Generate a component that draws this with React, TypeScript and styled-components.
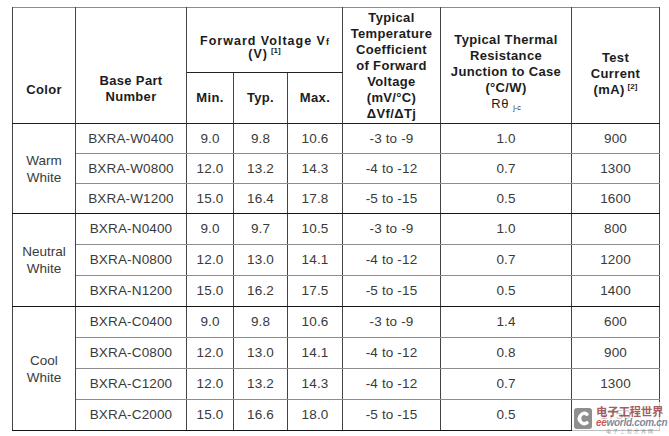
import * as React from "react";
import styled, { createGlobalStyle } from "styled-components";

const ink = "#1c1c1c";
const dataInk = "#3a3a3a";
const rule = "#444";
const lightRule = "#8c8c8c";

const GlobalStyle = createGlobalStyle`
  html, body {
    margin: 0;
    padding: 0;
    background: #fff;
  }
  body {
    font-family: "Liberation Sans", Arial, sans-serif;
  }
`;

const Page = styled.div`
  position: relative;
  width: 669px;
  height: 436px;
  padding: 7px 0 0 12px;
  box-sizing: border-box;
  overflow: hidden;
`;

const Table = styled.table`
  border-collapse: collapse;
  table-layout: fixed;
  width: 647px;
  border-top: 1px solid ${lightRule};
  border-left: 1px solid #111;
  border-right: 1px solid #222;
  border-bottom: 1px solid #111;
`;

const HeadCell = styled.th<{
  $h?: number;
  $spacing?: number;
  $lh?: number;
  $size?: number;
  $pt?: number;
}>`
  height: ${(p) => (p.$h ? `${p.$h}px` : "auto")};
  padding: ${(p) => p.$pt ?? 0}px 2px 0;
  border: 1px solid ${rule};
  border-top: none;
  border-bottom: 1px solid #222;
  color: ${ink};
  font-size: ${(p) => p.$size ?? 13}px;
  font-weight: 700;
  line-height: ${(p) => p.$lh ?? 16}px;
  letter-spacing: ${(p) => p.$spacing ?? 0.35}px;
  text-align: center;
  vertical-align: middle;
`;

const Cell = styled.td<{ $end?: boolean; $h: number }>`
  height: ${(p) => p.$h - 1}px;
  padding: 0;
  border-left: 1px solid ${rule};
  border-right: 1px solid ${rule};
  border-bottom: 1px solid ${(p) => (p.$end ? "#151515" : lightRule)};
  color: ${dataInk};
  font-size: 13.5px;
  line-height: 16px;
  letter-spacing: 0.15px;
  text-align: center;
  vertical-align: middle;
`;

const ColorCell = styled.td`
  padding: 0;
  border-left: 1px solid ${rule};
  border-right: 1px solid ${rule};
  border-bottom: 1px solid #151515;
  color: ${dataInk};
  font-size: 13.5px;
  line-height: 17px;
  text-align: center;
  vertical-align: middle;
`;

const Sup = styled.sup`
  font-size: 8px;
  line-height: 0;
  vertical-align: 5px;
  margin-left: 3px;
  letter-spacing: 0;
`;

const SmallSub = styled.span<{ $size: number; $weight: number; $drop?: number }>`
  font-size: ${(p) => p.$size}px;
  font-weight: ${(p) => p.$weight};
  letter-spacing: 0;
  vertical-align: ${(p) => -(p.$drop ?? 0)}px;
`;

const Regular = styled.span`
  font-weight: 400;
  letter-spacing: 0.6px;
`;

const Watermark = styled.div`
  position: absolute;
  left: 572px;
  top: 402px;
  width: 94px;
  height: 33px;
  display: flex;
  align-items: flex-start;
  gap: 4px;
  padding: 3px 0 0 2px;
  box-sizing: border-box;
  background: rgba(255, 255, 255, 0.72);
`;

const LogoMark = styled.svg`
  flex: none;
  margin-top: 3px;
`;

const MarkText = styled.div`
  display: flex;
  flex-direction: column;
  align-items: flex-start;
`;

const MarkTitle = styled.div`
  font-family: "Noto Sans CJK SC", "Liberation Serif", serif;
  font-size: 11.5px;
  font-weight: 700;
  line-height: 12px;
  letter-spacing: -0.3px;
  color: rgba(140, 40, 40, 0.75);
`;

const MarkSite = styled.div`
  font-family: "Liberation Sans", Arial, sans-serif;
  font-size: 10px;
  font-style: italic;
  font-weight: 700;
  line-height: 11px;
  letter-spacing: -0.3px;
  color: rgba(70, 80, 110, 0.7);
  & > span {
    color: rgba(200, 40, 40, 0.8);
  }
`;

const MarkTiny = styled.div`
  font-family: "Noto Sans CJK SC", sans-serif;
  font-size: 5px;
  line-height: 6px;
  letter-spacing: 2px;
  color: rgba(90, 90, 90, 0.6);
  margin-left: 10px;
`;

type Row = {
  part: string;
  min: string;
  typ: string;
  max: string;
  coeff: string;
  theta: string;
  current: string;
};

type Group = { color: [string, string]; rows: Row[] };

const groups: Group[] = [
  {
    color: ["Warm", "White"],
    rows: [
      { part: "BXRA-W0400", min: "9.0", typ: "9.8", max: "10.6", coeff: "-3 to -9", theta: "1.0", current: "900" },
      { part: "BXRA-W0800", min: "12.0", typ: "13.2", max: "14.3", coeff: "-4 to -12", theta: "0.7", current: "1300" },
      { part: "BXRA-W1200", min: "15.0", typ: "16.4", max: "17.8", coeff: "-5 to -15", theta: "0.5", current: "1600" },
    ],
  },
  {
    color: ["Neutral", "White"],
    rows: [
      { part: "BXRA-N0400", min: "9.0", typ: "9.7", max: "10.5", coeff: "-3 to -9", theta: "1.0", current: "800" },
      { part: "BXRA-N0800", min: "12.0", typ: "13.0", max: "14.1", coeff: "-4 to -12", theta: "0.7", current: "1200" },
      { part: "BXRA-N1200", min: "15.0", typ: "16.2", max: "17.5", coeff: "-5 to -15", theta: "0.5", current: "1400" },
    ],
  },
  {
    color: ["Cool", "White"],
    rows: [
      { part: "BXRA-C0400", min: "9.0", typ: "9.8", max: "10.6", coeff: "-3 to -9", theta: "1.4", current: "600" },
      { part: "BXRA-C0800", min: "12.0", typ: "13.0", max: "14.1", coeff: "-4 to -12", theta: "0.8", current: "900" },
      { part: "BXRA-C1200", min: "12.0", typ: "13.2", max: "14.3", coeff: "-4 to -12", theta: "0.7", current: "1300" },
      { part: "BXRA-C2000", min: "15.0", typ: "16.6", max: "18.0", coeff: "-5 to -15", theta: "0.5", current: "1750" },
    ],
  },
];

// row heights as measured on the datasheet scan
const rowHeights = [30, 30, 30, 31, 31, 31, 31, 31, 31, 31];

export default function App() {
  let rowIndex = 0;

  return (
    <Page>
      <GlobalStyle />
      <Table>
        <colgroup>
          <col style={{ width: 63 }} />
          <col style={{ width: 111 }} />
          <col style={{ width: 47 }} />
          <col style={{ width: 54 }} />
          <col style={{ width: 55 }} />
          <col style={{ width: 98 }} />
          <col style={{ width: 131 }} />
          <col style={{ width: 88 }} />
        </colgroup>
        <thead>
          <tr>
            <HeadCell rowSpan={2} $pt={48}>
              Color
            </HeadCell>
            <HeadCell rowSpan={2} $pt={46}>
              Base Part
              <br />
              Number
            </HeadCell>
            <HeadCell colSpan={3} $h={50} $spacing={1} $size={12.5} $lh={12} $pt={14}>
              Forward Voltage V<SmallSub $size={9} $weight={700}>f</SmallSub>
              <br />
              (V)<Sup>[1]</Sup>
            </HeadCell>
            <HeadCell rowSpan={2}>
              Typical
              <br />
              Temperature
              <br />
              Coefficient
              <br />
              of Forward
              <br />
              Voltage
              <br />
              (mV/°C)
              <br />
              ΔVf/ΔTj
            </HeadCell>
            <HeadCell rowSpan={2} $pt={16}>
              Typical Thermal
              <br />
              Resistance
              <br />
              Junction to Case
              <br />
              (°C/W)
              <br />
              <Regular>
                Rθ <SmallSub $size={7} $weight={400} $drop={2}>j-c</SmallSub>
              </Regular>
            </HeadCell>
            <HeadCell rowSpan={2} $pt={16}>
              Test
              <br />
              Current
              <br />
              (mA)<Sup>[2]</Sup>
            </HeadCell>
          </tr>
          <tr>
            <HeadCell $h={50}>Min.</HeadCell>
            <HeadCell $h={50}>Typ.</HeadCell>
            <HeadCell $h={50}>Max.</HeadCell>
          </tr>
        </thead>
        <tbody>
          {groups.map((group) =>
            group.rows.map((row, i) => {
              const h = rowHeights[rowIndex++];
              const end = i === group.rows.length - 1;
              return (
                <tr key={row.part}>
                  {i === 0 && (
                    <ColorCell rowSpan={group.rows.length}>
                      {group.color[0]}
                      <br />
                      {group.color[1]}
                    </ColorCell>
                  )}
                  <Cell $h={h} $end={end}>{row.part}</Cell>
                  <Cell $h={h} $end={end}>{row.min}</Cell>
                  <Cell $h={h} $end={end}>{row.typ}</Cell>
                  <Cell $h={h} $end={end}>{row.max}</Cell>
                  <Cell $h={h} $end={end}>{row.coeff}</Cell>
                  <Cell $h={h} $end={end}>{row.theta}</Cell>
                  <Cell $h={h} $end={end}>{row.current}</Cell>
                </tr>
              );
            })
          )}
        </tbody>
      </Table>
      <Watermark>
        <LogoMark width="18" height="21" viewBox="0 0 18 21">
          <rect x="0" y="0" width="18" height="21" rx="3" fill="#8f8f8f" />
          <path
            d="M13 6.2 A5 5 0 1 0 13 14.8"
            fill="none"
            stroke="#fff"
            strokeWidth="3.4"
            strokeLinecap="round"
          />
        </LogoMark>
        <MarkText>
          <MarkTitle>电子工程世界</MarkTitle>
          <MarkSite>
            <span>ee</span>world.com.cn
          </MarkSite>
          <MarkTiny>电子工程世界网</MarkTiny>
        </MarkText>
      </Watermark>
    </Page>
  );
}
